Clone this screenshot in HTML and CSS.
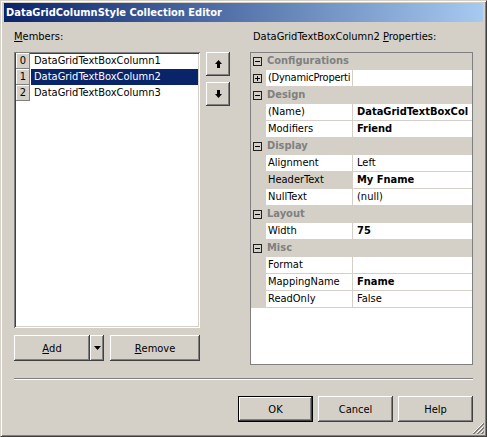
FILE: index.html
```html
<!DOCTYPE html>
<html>
<head>
<meta charset="utf-8">
<link rel="stylesheet" href="styles.css">
</head>
<body>
<div class="window">
  <div class="titlebar"><span class="title">DataGridColumnStyle Collection Editor</span></div>
  <div class="client">
    <div class="main">
      <div class="left">
        <div class="label"><u>M</u>embers:</div>
        <div class="listbox">
          <div class="item"><span class="idx">0</span><span class="itext">DataGridTextBoxColumn1</span></div>
          <div class="item sel"><span class="idx">1</span><span class="itext">DataGridTextBoxColumn2</span></div>
          <div class="item"><span class="idx">2</span><span class="itext">DataGridTextBoxColumn3</span></div>
        </div>
        <div class="btnrow">
          <div class="split">
            <div class="btn add"><u>A</u>dd</div>
            <div class="btn drop"><svg width="7" height="4" viewBox="0 0 7 4"><path d="M0 0H7L3.5 4Z" fill="#000"/></svg></div>
          </div>
          <div class="btn remove"><u>R</u>emove</div>
        </div>
      </div>
      <div class="arrows">
        <div class="btn arrow"><svg width="7" height="8" viewBox="0 0 7 8"><path d="M3.5 0L7 4H5V8H2V4H0Z" fill="#000"/></svg></div>
        <div class="btn arrow"><svg width="7" height="8" viewBox="0 0 7 8"><path d="M3.5 8L7 4H5V0H2V4H0Z" fill="#000"/></svg></div>
      </div>
      <div class="right">
        <div class="label">DataGridTextBoxColumn2 <u>P</u>roperties:</div>
        <div class="grid">
          <div class="cat"><span class="margin"><span class="box"><span class="h"></span></span></span><span class="cname">Configurations</span></div>
          <div class="prop"><span class="margin"><span class="box"><span class="h"></span><span class="v"></span></span></span><span class="pname narrow">(DynamicProperti</span><span class="pval"></span></div>
          <div class="cat"><span class="margin"><span class="box"><span class="h"></span></span></span><span class="cname">Design</span></div>
          <div class="prop"><span class="margin"></span><span class="pname">(Name)</span><span class="pval b">DataGridTextBoxCol</span></div>
          <div class="prop"><span class="margin"></span><span class="pname">Modifiers</span><span class="pval b">Friend</span></div>
          <div class="cat"><span class="margin"><span class="box"><span class="h"></span></span></span><span class="cname">Display</span></div>
          <div class="prop"><span class="margin"></span><span class="pname">Alignment</span><span class="pval">Left</span></div>
          <div class="prop"><span class="margin"></span><span class="pname selected">HeaderText</span><span class="pval b">My Fname</span></div>
          <div class="prop"><span class="margin"></span><span class="pname">NullText</span><span class="pval">(null)</span></div>
          <div class="cat"><span class="margin"><span class="box"><span class="h"></span></span></span><span class="cname">Layout</span></div>
          <div class="prop"><span class="margin"></span><span class="pname">Width</span><span class="pval b">75</span></div>
          <div class="cat"><span class="margin"><span class="box"><span class="h"></span></span></span><span class="cname">Misc</span></div>
          <div class="prop"><span class="margin"></span><span class="pname">Format</span><span class="pval"></span></div>
          <div class="prop"><span class="margin"></span><span class="pname">MappingName</span><span class="pval b">Fname</span></div>
          <div class="prop"><span class="margin"></span><span class="pname">ReadOnly</span><span class="pval">False</span></div>
        </div>
      </div>
    </div>
    <div class="separator"></div>
    <div class="footer">
      <div class="btn default">OK</div>
      <div class="btn">Cancel</div>
      <div class="btn">Help</div>
    </div>
  </div>
  <div class="grip"><svg width="12" height="12" viewBox="0 0 12 12">
    <path d="M11 1L1 11M11 5L5 11M11 9L9 11" stroke="#fff" stroke-width="1"/>
    <path d="M12 1L1 12M12 2L2 12M12 5L5 12M12 6L6 12M12 9L9 12M12 10L10 12" stroke="#808080" stroke-width="1"/>
  </svg></div>
</div>
</body>
</html>
```
FILE: styles.css
```css
html, body {
  margin: 0;
  padding: 0;
  background: #d4d0c8;
}
body {
  font-family: "DejaVu Sans Condensed", "Liberation Sans", sans-serif;
  font-size: 11px;
  color: #000;
}
.window {
  position: relative;
  width: 487px;
  height: 437px;
  box-sizing: border-box;
  border: 1px solid;
  border-color: #d4d0c8 #404040 #404040 #d4d0c8;
  box-shadow: inset 1px 1px #fff, inset -1px -1px #808080;
  padding: 2px 3px 3px 3px;
  background: #d4d0c8;
}
.titlebar {
  height: 19px;
  background: linear-gradient(to right, #0a246a, #a6caf0);
  display: flex;
  align-items: center;
  padding-left: 2px;
}
.title {
  color: #fff;
  font-weight: bold;
  font-size: 11px;
}
.client {
  padding: 8px 10px 0 10px;
}
.main {
  display: flex;
}
.label {
  height: 14px;
  line-height: 14px;
  margin-bottom: 8px;
  white-space: nowrap;
}
.left {
  width: 186px;
  display: flex;
  flex-direction: column;
}
.listbox {
  height: 276px;
  box-sizing: border-box;
  background: #fff;
  box-shadow: inset 1px 1px #808080, inset -1px -1px #fff, inset 2px 2px #404040, inset -2px -2px #d4d0c8;
  padding: 1px 2px 2px 2px;
}
.item {
  display: flex;
  height: 16px;
  line-height: 16px;
}
.idx {
  width: 14px;
  flex: none;
  text-align: center;
  background: #d4d0c8;
  box-shadow: inset -1px -1px #808080, inset 1px 1px #fff;
}
.itext {
  flex: 1;
  padding-left: 4px;
  white-space: nowrap;
}
.item.sel .itext {
  background: #0a246a;
  color: #fff;
  margin-left: 1px;
  padding-left: 3px;
}
.btn {
  box-sizing: border-box;
  background: #d4d0c8;
  box-shadow: inset -1px -1px #404040, inset 1px 1px #fff, inset -2px -2px #808080, inset 2px 2px #d4d0c8;
  display: flex;
  align-items: center;
  justify-content: center;
  height: 26px;
}
.btnrow {
  display: flex;
  margin-top: 7px;
  gap: 6px;
}
.split {
  display: flex;
  width: 90px;
}
.add {
  width: 76px;
}
.drop {
  width: 14px;
}
.remove {
  width: 90px;
}
.arrows {
  width: 24px;
  margin-left: 6px;
  padding-top: 22px;
  display: flex;
  flex-direction: column;
  gap: 6px;
}
.arrow {
  height: 24px;
}
.right {
  width: 223px;
  margin-left: 20px;
  display: flex;
  flex-direction: column;
}
.right .label {
  padding-left: 3px;
}
.grid {
  height: 313px;
  box-sizing: border-box;
  border: 1px solid #808080;
  background: #fff;
  overflow: hidden;
}
.cat, .prop {
  display: flex;
  height: 17px;
  line-height: 16px;
}
.cat {
  background: #d4d0c8;
}
.margin {
  width: 15px;
  flex: none;
  background: #d4d0c8;
  position: relative;
}
.box {
  position: absolute;
  left: 2px;
  top: 4px;
  width: 9px;
  height: 9px;
  box-sizing: border-box;
  border: 1px solid #202020;
}
.box .h {
  position: absolute;
  left: 1px;
  top: 3px;
  width: 5px;
  height: 1px;
  background: #000;
}
.box .v {
  position: absolute;
  left: 3px;
  top: 1px;
  width: 1px;
  height: 5px;
  background: #000;
}
.cname {
  color: #808080;
  font-weight: bold;
  padding-left: 1px;
  white-space: nowrap;
}
.pname {
  width: 87px;
  flex: none;
  box-sizing: border-box;
  padding-left: 2px;
  border-right: 1px solid #d4d0c8;
  border-bottom: 1px solid #d4d0c8;
  white-space: nowrap;
  overflow: hidden;
}
.pname.narrow {
  letter-spacing: -0.25px;
}
.pname.selected {
  background: #d4d0c8;
}
.pval {
  flex: 1;
  min-width: 0;
  padding-left: 4px;
  border-bottom: 1px solid #d4d0c8;
  white-space: nowrap;
  overflow: hidden;
}
.pval.b {
  font-weight: bold;
}
.separator {
  margin-top: 13px;
  height: 0;
  border-top: 1px solid #808080;
  border-bottom: 1px solid #fff;
}
.footer {
  display: flex;
  justify-content: flex-end;
  gap: 5px;
  margin-top: 16px;
}
.footer .btn {
  width: 75px;
}
.footer .btn.default {
  border: 1px solid #000;
}
.grip {
  position: absolute;
  right: 2px;
  bottom: 2px;
  width: 12px;
  height: 12px;
  line-height: 0;
}
```
